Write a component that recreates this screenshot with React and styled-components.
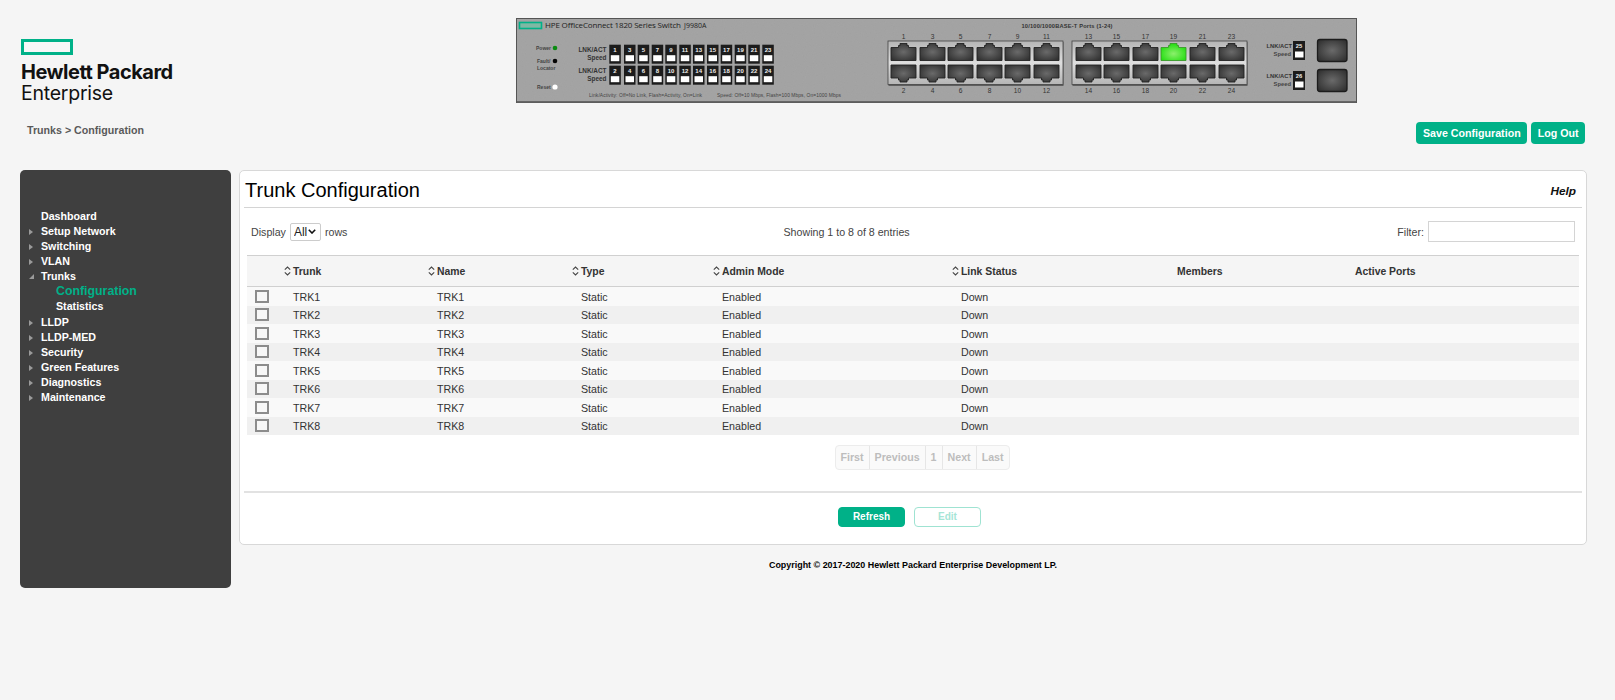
import React from "react";
import styled, { createGlobalStyle } from "styled-components";

const Global = createGlobalStyle`
  html, body { margin: 0; padding: 0; background: #f5f5f5; }
  body { font-family: "Liberation Sans", Arial, sans-serif; font-size: 10.67px; color: #333; }
`;

const GREEN = "#00b188";

const Page = styled.div`
  width: 1615px;
  min-height: 700px;
  background: #f5f5f5;
`;
const TopRow = styled.header`
  display: flex;
  height: 103px;
  padding-left: 21px;
`;
const LogoBlock = styled.div`
  width: 495px;
  padding-top: 39px;
  color: #111;
  font-family: Inter, "Liberation Sans", sans-serif;
`;
const LogoMark = styled.div`
  box-sizing: border-box;
  width: 52px;
  height: 16px;
  border: 3px solid ${GREEN};
  background: #f7f7f7;
`;
const LogoStrong = styled.div`
  margin-top: 7px;
  font-size: 20px;
  line-height: 20px;
  font-weight: 700;
  letter-spacing: -0.5px;
`;
const LogoLight = styled.div`
  margin-top: 1px;
  font-size: 19.5px;
  line-height: 20px;
  font-weight: 400;
  letter-spacing: -0.25px;
`;
const Plate = styled.svg`
  display: block;
  margin-top: 18px;
  width: 841px;
  height: 85px;
  flex: none;
`;
const CrumbRow = styled.div`
  display: flex;
  align-items: center;
  justify-content: space-between;
  height: 22px;
  margin-top: 19px;
  padding: 0 30px 0 27px;
`;
const Crumb = styled.div`
  font-weight: 700;
  color: #5a5a5a;
  margin-top: -6px;
`;
const Actions = styled.div`
  display: flex;
  gap: 4px;
`;
const HeadButton = styled.button`
  height: 22px;
  padding: 0 6.5px;
  border: 0;
  border-radius: 4px;
  background: ${GREEN};
  color: #fff;
  font: 700 10.67px "Liberation Sans", Arial, sans-serif;
`;
const Body = styled.div`
  display: flex;
  gap: 8.5px;
  margin-top: 26px;
  padding-left: 20px;
`;
const Side = styled.nav`
  box-sizing: border-box;
  width: 210.5px;
  height: 418px;
  padding-top: 38.5px;
  border-radius: 5px;
  background: #3f3f3f;
`;
const MenuItem = styled.div`
  position: relative;
  height: 15.17px;
  line-height: 15.17px;
  padding-left: ${(p) => (p.$sub ? 36 : 21)}px;
  color: ${(p) => (p.$active ? GREEN : "#fff")};
  font-weight: 700;
  font-size: ${(p) => (p.$active ? "12.35px" : "10.67px")};
`;
const Arrow = styled.span`
  position: absolute;
  left: 9px;
  top: 5px;
  width: 0;
  height: 0;
  border-style: solid;
  ${(p) =>
    p.$open
      ? "border-width: 0 0 5px 5px; border-color: transparent transparent #9a9a9a transparent;"
      : "border-width: 3px 0 3px 4px; border-color: transparent transparent transparent #9a9a9a;"}
`;
const MainCol = styled.main`
  width: 1348px;
`;
const Panel = styled.section`
  box-sizing: border-box;
  height: 375px;
  background: #fff;
  border: 1px solid #d8d8d8;
  border-radius: 5px;
`;
const TitleRow = styled.div`
  display: flex;
  align-items: center;
  justify-content: space-between;
  height: 37px;
  margin: 0 4px 0 4px;
  padding: 3px 6px 0 1px;
  box-sizing: border-box;
  border-bottom: 1px solid #d4d4d4;
`;
const Title = styled.h1`
  margin: 0;
  font-size: 20px;
  font-weight: 400;
  color: #000;
`;
const Help = styled.span`
  font-size: 11.8px;
  font-weight: 700;
  font-style: italic;
  color: #111;
`;
const Toolbar = styled.div`
  display: grid;
  grid-template-columns: 532.5px auto 1fr;
  align-items: center;
  height: 47px;
  padding: 0 11px 0 11px;
  color: #444;
`;
const Inline = styled.label`
  display: flex;
  align-items: center;
  gap: 4px;
  justify-content: ${(p) => (p.$end ? "flex-end" : "flex-start")};
`;
const SelectWrap = styled.span`
  position: relative;
  display: block;
  width: 31px;
  height: 18px;
`;
const Select = styled.select`
  appearance: none;
  box-sizing: border-box;
  display: block;
  width: 31px;
  height: 18px;
  padding: 0 0 0 3px;
  border: 1px solid #ccc;
  border-radius: 2px;
  background: #fff;
  color: #222;
  font: 12px "Liberation Sans", Arial, sans-serif;
`;
const SelectChevron = styled.svg`
  position: absolute;
  right: 5px;
  top: 6.5px;
  pointer-events: none;
`;
const FilterInput = styled.input`
  box-sizing: border-box;
  width: 147px;
  height: 21px;
  border: 1px solid #d4d4d4;
  background: #fff;
`;
const TableWrap = styled.div`
  margin: 0 7px;
`;
const Table = styled.table`
  width: 1332px;
  table-layout: fixed;
  border-collapse: collapse;
`;
const Th = styled.th`
  box-sizing: border-box;
  height: 31px;
  padding: 0;
  background: #f5f5f5;
  border-top: 1px solid #d0d0d0;
  border-bottom: 1px solid #d0d0d0;
  text-align: left;
  font-size: 10.4px;
  font-weight: 700;
  color: #333;
`;
const SortWrap = styled.span`
  display: flex;
  align-items: center;
  gap: 2px;
`;
const Tr = styled.tr`
  background: ${(p) => (p.$odd ? "#f9f9f9" : "#f0f0f0")};
`;
const Td = styled.td`
  height: 18.5px;
  padding: 1px 0 0 9px;
  box-sizing: border-box;
  font-size: 10.67px;
  line-height: 12px;
  color: #333;
`;
const CheckCell = styled.td`
  height: 18.5px;
  padding: 0 0 0 8px;
  line-height: 0;
`;
const Check = styled.input`
  appearance: none;
  box-sizing: border-box;
  display: block;
  width: 14px;
  height: 13px;
  margin: 0;
  border: 2px solid #8c8c8c;
  background: #f7f7f7;
`;
const Pager = styled.div`
  display: inline-flex;
  margin: 9.5px 0 0 594.5px;
  height: 23px;
  border: 1px solid #ececec;
  border-radius: 4px;
  background: #fafafa;
  overflow: hidden;
`;
const PageBtn = styled.span`
  display: flex;
  align-items: center;
  padding: 0 5px;
  border-left: ${(p) => (p.$first ? "0" : "1px solid #e6e6e6")};
  color: #bdbdbd;
  font-weight: 700;
  font-size: 10.67px;
`;
const FormFoot = styled.div`
  display: flex;
  gap: 9px;
  margin: 21px 4px 0 4px;
  padding: 14px 0 0 594px;
  border-top: 2px solid #e2e2e2;
`;
const ActionBtn = styled.button`
  box-sizing: border-box;
  width: 67px;
  height: 20px;
  padding: 0;
  border-radius: 4px;
  border: 1px solid ${(p) => (p.$off ? "#9fe3d2" : GREEN)};
  background: ${(p) => (p.$off ? "#fff" : GREEN)};
  color: ${(p) => (p.$off ? "#a6e5d6" : "#fff")};
  font: 700 10px "Liberation Sans", Arial, sans-serif;
`;
const Copy = styled.div`
  margin-top: 13.5px;
  text-align: center;
  font-size: 8.93px;
  line-height: 12px;
  font-weight: 700;
  color: #000;
`;

const Sort = () => (
  <svg width="7" height="10" viewBox="0 0 7 10" fill="none" stroke="#444" strokeWidth="1.1">
    <path d="M0.8 3.6 3.5 1 6.2 3.6M0.8 6.4 3.5 9 6.2 6.4" />
  </svg>
);

const PX = [891, 920, 948, 977, 1005, 1034, 1076, 1104, 1133, 1161, 1190, 1219];
const upperPath = (x) =>
  `M${x} 47.5H${x + 7.5}V45.5H${x + 9}V43.5H${x + 16}V45.5H${x + 17.5}V47.5H${x + 25}V60.5H${x}Z`;
const lowerPath = (x) =>
  `M${x} 65H${x + 25}V78H${x + 17.5}V80H${x + 16}V82H${x + 9}V80H${x + 7.5}V78H${x}Z`;
const LEDX = [609.3, 624, 637.7, 651.7, 665.3, 679.3, 693, 707, 720.7, 734.7, 748.3, 762.3];

const Led = ({ x, y, n }) => (
  <g>
    <rect x={x} y={y} width="11.5" height="19" fill="#1c1c1c" />
    <text x={x + 5.7} y={y + 7.5} textAnchor="middle" fontSize="6" fontWeight="700" fill="#eee">{n}</text>
    <rect x={x + 1.5} y={y + 10.5} width="8.5" height="6" fill="#fff" />
  </g>
);

const Faceplate = () => (
  <Plate viewBox="516 18 841 85" fontFamily="'Liberation Sans', Arial, sans-serif">
    <defs>
      <filter id="grain" x="0" y="0" width="100%" height="100%">
        <feTurbulence type="fractalNoise" baseFrequency="0.9" numOctaves="2" seed="4" result="n" />
        <feColorMatrix in="n" type="matrix" values="0 0 0 0 0.42  0 0 0 0 0.42  0 0 0 0 0.42  0.3 0.3 0 0 -0.1" result="g" />
        <feMerge><feMergeNode in="SourceGraphic" /><feMergeNode in="g" /></feMerge>
      </filter>
      <radialGradient id="hole" cx="50%" cy="50%" r="60%">
        <stop offset="0%" stopColor="#6a6a6a" />
        <stop offset="100%" stopColor="#333" />
      </radialGradient>
      <linearGradient id="frame" x1="0" y1="0" x2="0" y2="1">
        <stop offset="0%" stopColor="#b5b5b5" />
        <stop offset="50%" stopColor="#dedede" />
        <stop offset="100%" stopColor="#b5b5b5" />
      </linearGradient>
      <radialGradient id="lit" cx="50%" cy="60%" r="60%">
        <stop offset="0%" stopColor="#8cf06c" />
        <stop offset="100%" stopColor="#22dd10" />
      </radialGradient>
    </defs>
    <rect x="516" y="18" width="841" height="85" fill="#a0a0a0" filter="url(#grain)" />
    <rect x="516.5" y="18.5" width="840" height="84" fill="none" stroke="#555" />
    <rect x="517" y="101" width="839" height="1.5" fill="#666" />

    <rect x="519.5" y="22.5" width="22" height="6" fill="#7fb8a4" stroke={GREEN} strokeWidth="1.6" />
    <text x="545" y="28" fontSize="8" fill="#222" fontFamily="'Open Sans', sans-serif" textLength="136">HPE OfficeConnect 1820 Series Switch</text>
    <text x="684" y="28" fontSize="7" fill="#222" fontFamily="'Open Sans', sans-serif">J9980A</text>

    <text x="536" y="50" fontSize="5" fontWeight="700" fill="#444">Power</text>
    <circle cx="555" cy="48" r="2.3" fill="#0b8c12" />
    <text x="537" y="63" fontSize="5" fontWeight="700" fill="#444">Fault/</text>
    <circle cx="555" cy="61" r="2.3" fill="#050505" />
    <text x="537" y="70" fontSize="5" fontWeight="700" fill="#444">Locator</text>
    <text x="537" y="89" fontSize="5" fontWeight="700" fill="#444">Reset</text>
    <circle cx="555" cy="87" r="2.6" fill="#fff" />

    {[[52, "LNK/ACT"], [60, "Speed"], [73, "LNK/ACT"], [81, "Speed"]].map(([y, t], i) => (
      <text key={i} x="606.5" y={y} textAnchor="end" fontSize="6.4" fontWeight="700" fill="#333">{t}</text>
    ))}
    {LEDX.map((x, i) => (
      <g key={x}>
        <Led x={x} y={44.7} n={i * 2 + 1} />
        <Led x={x} y={65.7} n={i * 2 + 2} />
      </g>
    ))}
    <text x="589" y="97" fontSize="4.9" fontWeight="400" fill="#444" textLength="113">Link/Activity: Off=No Link, Flash=Activity, On=Link</text>
    <text x="717" y="97" fontSize="4.9" fontWeight="400" fill="#444" textLength="124">Speed: Off=10 Mbps, Flash=100 Mbps, On=1000 Mbps</text>

    <text x="1067" y="28" textAnchor="middle" fontSize="5.7" fontWeight="700" fill="#333" textLength="91">10/100/1000BASE-T Ports (1-24)</text>

    {[888, 1072].map((x) => (
      <g key={x}>
        <rect x={x + 0.5} y="42" width="175" height="44" fill="#5f5f5f" />
        <rect x={x} y="41" width="175" height="43.5" fill="url(#frame)" stroke="#444" strokeWidth="0.8" />
      </g>
    ))}
    {PX.map((x, i) => {
      const up = i * 2 + 1;
      const down = i * 2 + 2;
      const lit = up === 19;
      return (
        <g key={x}>
          <text x={x + 12.5} y="38.5" textAnchor="middle" fontSize="6.6" fill="#333">{up}</text>
          <text x={x + 12.5} y="93" textAnchor="middle" fontSize="6.6" fill="#333">{down}</text>
          <path d={upperPath(x)} fill={lit ? "url(#lit)" : "url(#hole)"} stroke={lit ? "#3a9a2a" : "#222"} strokeWidth="0.9" />
          <path d={lowerPath(x)} fill="url(#hole)" stroke="#222" strokeWidth="0.9" />
        </g>
      );
    })}

    {[[48, 56, 41, 25], [78, 86, 71, 26]].map(([a, b, c, n]) => (
      <g key={n}>
        <text x="1292" y={a} textAnchor="end" fontSize="5.8" fontWeight="700" fill="#333">LNK/ACT</text>
        <text x="1291" y={b} textAnchor="end" fontSize="5.8" fontWeight="700" fill="#444">Speed</text>
        <rect x="1293" y={c} width="12" height="19" fill="#1c1c1c" />
        <text x="1299" y={c + 7} textAnchor="middle" fontSize="5.8" fontWeight="700" fill="#eee">{n}</text>
        <rect x="1295" y={c + 10.5} width="8.5" height="6" fill="#fff" />
      </g>
    ))}
    {[39.5, 69.5].map((y) => (
      <rect key={y} x="1317.5" y={y} width="29.5" height="22" rx="2.5" fill="url(#hole)" stroke="#1c1c1c" strokeWidth="1.3" />
    ))}
  </Plate>
);

const menu = [
  { t: "Dashboard", plain: true },
  { t: "Setup Network" },
  { t: "Switching" },
  { t: "VLAN" },
  { t: "Trunks", open: true },
  { t: "Configuration", sub: true, active: true },
  { t: "Statistics", sub: true },
  { t: "LLDP" },
  { t: "LLDP-MED" },
  { t: "Security" },
  { t: "Green Features" },
  { t: "Diagnostics" },
  { t: "Maintenance" },
];

const cols = [
  { w: 37 },
  { w: 144, t: "Trunk", s: 1 },
  { w: 144, t: "Name", s: 1 },
  { w: 141, t: "Type", s: 1 },
  { w: 239, t: "Admin Mode", s: 1 },
  { w: 225, t: "Link Status", s: 1 },
  { w: 178, t: "Members" },
  { w: 224, t: "Active Ports" },
];

export default function App() {
  return (
    <Page>
      <Global />
      <TopRow>
        <LogoBlock>
          <LogoMark />
          <LogoStrong>Hewlett Packard</LogoStrong>
          <LogoLight>Enterprise</LogoLight>
        </LogoBlock>
        <Faceplate />
      </TopRow>
      <CrumbRow>
        <Crumb>Trunks &gt; Configuration</Crumb>
        <Actions>
          <HeadButton>Save Configuration</HeadButton>
          <HeadButton>Log Out</HeadButton>
        </Actions>
      </CrumbRow>
      <Body>
        <Side>
          {menu.map((m) => (
            <MenuItem key={m.t} $sub={m.sub} $active={m.active}>
              {!m.plain && !m.sub && <Arrow $open={m.open} />}
              {m.t}
            </MenuItem>
          ))}
        </Side>
        <MainCol>
          <Panel>
            <TitleRow>
              <Title>Trunk Configuration</Title>
              <Help>Help</Help>
            </TitleRow>
            <Toolbar>
              <Inline>
                Display
                <SelectWrap>
                  <Select defaultValue="All"><option>All</option></Select>
                  <SelectChevron width="8" height="5" viewBox="0 0 8 5" fill="none" stroke="#111" strokeWidth="1.6">
                    <path d="M0.8 0.8 4 4 7.2 0.8" />
                  </SelectChevron>
                </SelectWrap>
                rows
              </Inline>
              <span>Showing 1 to 8 of 8 entries</span>
              <Inline $end>
                Filter:
                <FilterInput />
              </Inline>
            </Toolbar>
            <TableWrap>
              <Table>
                <colgroup>
                  {cols.map((c, i) => <col key={i} width={c.w} />)}
                </colgroup>
                <thead>
                  <tr>
                    {cols.map((c, i) => (
                      <Th key={i}>
                        {c.s ? <SortWrap><Sort />{c.t}</SortWrap> : c.t}
                      </Th>
                    ))}
                  </tr>
                </thead>
                <tbody>
                  {[1, 2, 3, 4, 5, 6, 7, 8].map((n) => (
                    <Tr key={n} $odd={n % 2 === 1}>
                      <CheckCell><Check type="checkbox" /></CheckCell>
                      <Td>TRK{n}</Td>
                      <Td>TRK{n}</Td>
                      <Td>Static</Td>
                      <Td>Enabled</Td>
                      <Td>Down</Td>
                      <Td />
                      <Td />
                    </Tr>
                  ))}
                </tbody>
              </Table>
            </TableWrap>
            <Pager>
              {["First", "Previous", "1", "Next", "Last"].map((p, i) => (
                <PageBtn key={p} $first={i === 0}>{p}</PageBtn>
              ))}
            </Pager>
            <FormFoot>
              <ActionBtn>Refresh</ActionBtn>
              <ActionBtn $off>Edit</ActionBtn>
            </FormFoot>
          </Panel>
          <Copy>Copyright © 2017-2020 Hewlett Packard Enterprise Development LP.</Copy>
        </MainCol>
      </Body>
    </Page>
  );
}
